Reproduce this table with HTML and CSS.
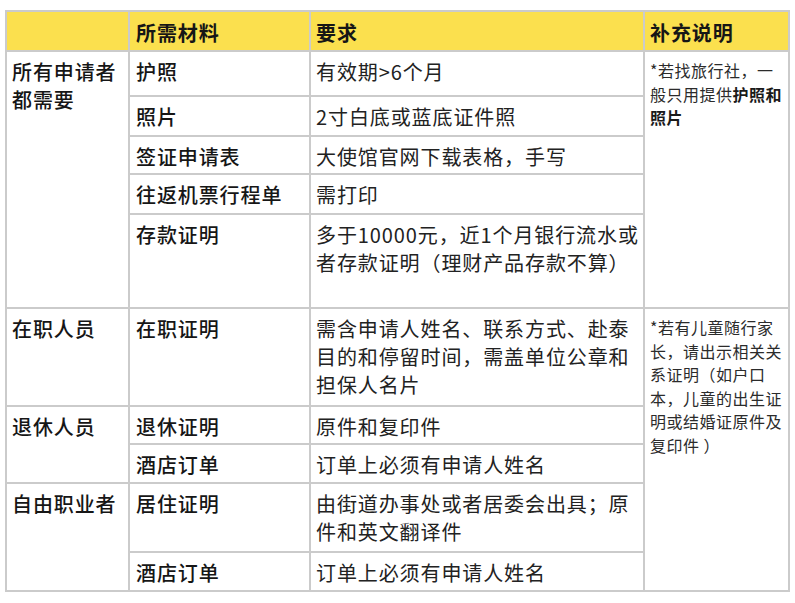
FILE: index.html
```html
<!DOCTYPE html>
<html lang="zh-CN">
<head>
<meta charset="utf-8">
<title>签证材料</title>
<link rel="stylesheet" href="styles.css">
</head>
<body>
<table class="visa">
  <colgroup>
    <col class="c-who">
    <col class="c-item">
    <col class="c-req">
    <col class="c-note">
  </colgroup>
  <thead>
    <tr class="r-head">
      <th></th>
      <th class="item-col">所需材料</th>
      <th>要求</th>
      <th>补充说明</th>
    </tr>
  </thead>
  <tbody>
    <tr class="r-45">
      <td class="who" rowspan="5">所有申请者<br>都需要</td>
      <td class="item">护照</td>
      <td class="req">有效期&gt;6个月</td>
      <td class="note" rowspan="5">*若找旅行社，一<br>般只用提供<b>护照和</b><br><b>照片</b></td>
    </tr>
    <tr class="r-40">
      <td class="item">照片</td>
      <td class="req">2寸白底或蓝底证件照</td>
    </tr>
    <tr class="r-38">
      <td class="item">签证申请表</td>
      <td class="req">大使馆官网下载表格，手写</td>
    </tr>
    <tr class="r-40">
      <td class="item">往返机票行程单</td>
      <td class="req">需打印</td>
    </tr>
    <tr class="r-94">
      <td class="item">存款证明</td>
      <td class="req">多于10000元，近1个月银行流水或<br>者存款证明（理财产品存款不算）</td>
    </tr>
    <tr class="r-98">
      <td class="who">在职人员</td>
      <td class="item">在职证明</td>
      <td class="req">需含申请人姓名、联系方式、赴泰<br>目的和停留时间，需盖单位公章和<br>担保人名片</td>
      <td class="note note-2" rowspan="5">*若有儿童随行家<br>长，请出示相关关<br>系证明（如户口<br>本，儿童的出生证<br>明或结婚证原件及<br>复印件 ）</td>
    </tr>
    <tr class="r-38">
      <td class="who" rowspan="2">退休人员</td>
      <td class="item">退休证明</td>
      <td class="req">原件和复印件</td>
    </tr>
    <tr class="r-39">
      <td class="item">酒店订单</td>
      <td class="req">订单上必须有申请人姓名</td>
    </tr>
    <tr class="r-69">
      <td class="who" rowspan="2">自由职业者</td>
      <td class="item">居住证明</td>
      <td class="req">由街道办事处或者居委会出具；原<br>件和英文翻译件</td>
    </tr>
    <tr class="r-39">
      <td class="item">酒店订单</td>
      <td class="req">订单上必须有申请人姓名</td>
    </tr>
  </tbody>
</table>
</body>
</html>
```

FILE: styles.css
```css
html, body {
  margin: 0;
  padding: 0;
  background: #ffffff;
}

body {
  font-family: "Noto Sans CJK SC", "Noto Sans", sans-serif;
  color: #1c1c1c;
}

.visa {
  border-collapse: collapse;
  table-layout: fixed;
  width: 785px;
  margin: 10px 0 0 5px;
}

.c-who { width: 123px; }
.c-item { width: 181px; }
.c-req { width: 334px; }
.c-note { width: 145px; }

.visa th,
.visa td {
  border: 2px solid #cbcbcb;
  padding: 6px 5px 0 5px;
  vertical-align: top;
  text-align: left;
  font-size: 20px;
  line-height: 28px;
  letter-spacing: 0.9px;
  white-space: nowrap;
  box-sizing: border-box;
}

.visa th {
  background: #fbe04e;
  font-weight: 700;
  padding-top: 7px;
  color: #161616;
}

.visa .item,
.visa .item-col {
  border-left-color: #b5b5b5;
  padding-left: 6px;
}

.who,
.item {
  font-weight: 500;
  color: #161616;
}

.req {
  font-weight: 400;
  color: #222222;
}

.visa .note {
  font-size: 16px;
  line-height: 23.5px;
  padding-top: 7px;
  letter-spacing: 0.5px;
  color: #2b2b2b;
}

.note b {
  font-weight: 700;
  color: #1a1a1a;
}

.r-head { height: 40px; }
.r-45 { height: 45px; }
.r-40 { height: 40px; }
.r-38 { height: 38px; }
.r-39 { height: 39px; }
.r-69 { height: 69px; }
.r-94 { height: 94px; }
.r-98 { height: 98px; }
```
